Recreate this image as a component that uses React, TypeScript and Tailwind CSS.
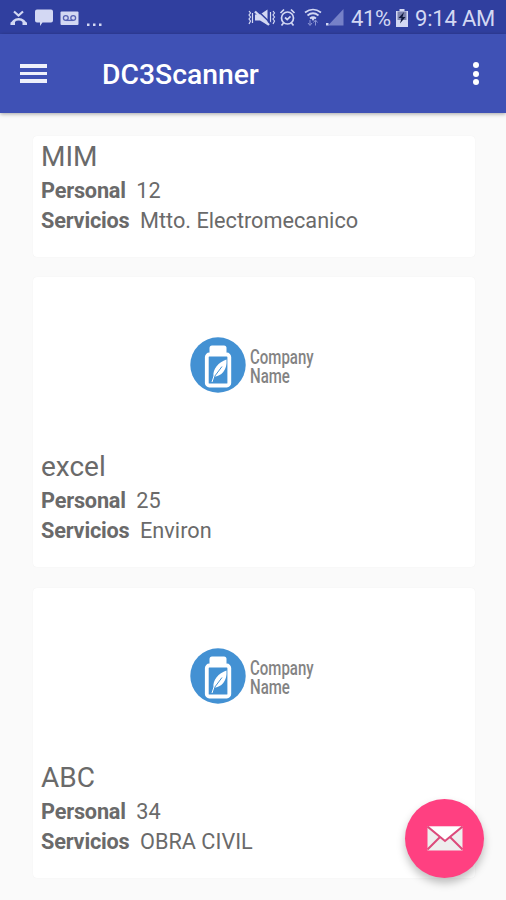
import React from "react";

type Company = { name: string; staff: string; service: string; logo: boolean };

const companies: Company[] = [
  { name: "MIM", staff: "12", service: "Mtto. Electromecanico", logo: false },
  { name: "excel", staff: "25", service: "Environ", logo: true },
  { name: "ABC", staff: "34", service: "OBRA CIVIL", logo: true },
];

function StatusBar() {
  return (
    <div className="flex h-[34px] shrink-0 items-center bg-[#303f9f] pt-[2px] text-[#d3d8f3]">
      <svg className="ml-[10px] h-[18px] w-[92px]" viewBox="10 9 92 18" fill="currentColor">
        <path d="M14 11.500 18.500 15.500 23 11.500" fill="none" stroke="currentColor" strokeWidth="2.200" />
        <path d="M12 24.500c0-2.500 3-5.200 6.700-5.200s6.700 2.700 6.700 5.200" fill="none" stroke="currentColor" strokeWidth="2.600" />
        <path d="M10.500 22.500l4.500-1.500v4h-4.500zM27 22.500 22.500 21v4H27z" />
        <path d="M37 9.500h14q2 0 2 2v9q0 2-2 2h-8.500L40 26v-3.500h-3q-2 0-2-2v-9q0-2 2-2z" />
        <rect x="60.500" y="11.500" width="18" height="13.500" rx="1" />
        <g fill="none" stroke="#5561b3" strokeWidth="1.300">
          <circle cx="65.800" cy="18" r="2.400" />
          <circle cx="73.200" cy="18" r="2.400" />
          <path d="M65.800 20.400h7.400" />
        </g>
        <path d="M87 23.500h2.500v2.500H87zM93 23.500h2.500v2.500H93zM99 23.500h2.500v2.500H99z" />
      </svg>
      <svg className="ml-[146px] h-[20px] w-[98px]" viewBox="248 8 98 20" fill="currentColor">
        <path d="M249 11l1.500 2-1.500 2 1.500 2-1.500 2 1.500 2-1.500 3M252.500 13v10M270.500 12v11M273 11l1.500 2-1.500 2 1.500 2-1.500 2 1.500 2-1.500 3" fill="none" stroke="currentColor" strokeWidth="1.200" />
        <path d="M255 14.500h5l7.500-5v15.500l-7.500-4.500h-5z" />
        <path d="M257.500 10.500 271 23.500" stroke="#303f9f" strokeWidth="1.500" />
        <path d="M255 11.500 269 25" stroke="currentColor" strokeWidth="2.400" />
        <g fill="none" stroke="currentColor" strokeWidth="1.700">
          <circle cx="287.500" cy="18" r="6" />
          <path d="M280.500 13l3.500-3.500M294.500 13 291 9.500M283.500 23l-2 2.500M291.500 23l2 2.500M285 17.500l2.200 2 3.300-3.200" />
        </g>
        <g fill="none" stroke="currentColor" strokeWidth="1.700">
          <path d="M305 12.500q8-6 16 0M307.500 15.500q5.500-4.500 11 0M310 18.500q3-2.500 6 0" />
        </g>
        <path d="M311 18h4l-2 3z" />
        <path d="M310 20v5M308 23l2 2.500 2-2.500M315.500 25.500v-5M313.500 22.500l2-2.500 2 2.500" stroke="#8c96d5" strokeWidth="1" fill="none" />
        <path d="M343.500 9v16.500H328z" fill="#7681c8" />
        <path d="M326 23h2.500v2.500H326z" />
      </svg>
      <span className="ml-[5px] mt-[1px] w-[40px] whitespace-nowrap text-[22px] leading-[24px] tracking-[-0.4px]">41%</span>
      <svg className="ml-[5px] h-[18px] w-[12px]" viewBox="0 0 12 18">
        <path d="M3.500 0h5v2H12v16H0V2h3.500z" fill="#d3d8f3" />
        <path d="M1.500 2.500h9V11h-9z" fill="#7d83ae" />
        <path d="M8 3 2.500 9h3L4 14.500 9.500 8h-3z" fill="#111a3f" />
      </svg>
      <span className="ml-[7px] mt-[1px] whitespace-nowrap text-[22px] leading-[24px] tracking-[-0.2px]">9:14 AM</span>
    </div>
  );
}

function AppBar() {
  return (
    <header className="z-10 flex h-[79px] shrink-0 items-center bg-[#3f51b5] text-white shadow-[0_1px_4px_rgba(0,0,0,0.35)]">
      <div className="ml-5 flex w-[27px] flex-col gap-1">
        <span className="h-[3.500px] bg-[#eef0fb]" />
        <span className="h-[3.500px] bg-[#eef0fb]" />
        <span className="h-[3.500px] bg-[#eef0fb]" />
      </div>
      <h1 className="ml-[55px] flex-1 pt-[2px] text-[28.300px] font-medium leading-[34px]">DC3Scanner</h1>
      <div className="mr-[27px] flex flex-col gap-[2.500px]">
        <span className="size-[6px] rounded-full bg-white" />
        <span className="size-[6px] rounded-full bg-white" />
        <span className="size-[6px] rounded-full bg-white" />
      </div>
    </header>
  );
}

function Logo() {
  return (
    <div className="flex h-[164px] pl-[149px] pt-[52px]">
      <svg className="size-[56px] shrink-0" viewBox="0 0 56 56">
        <circle cx="28" cy="28" r="27.700" fill="#4391d3" />
        <rect x="19.500" y="8.500" width="17" height="9" rx="2.500" fill="#fff" />
        <rect x="16.800" y="17.500" width="22.500" height="31" rx="2.500" fill="none" stroke="#fff" strokeWidth="3.800" />
        <path d="M36.500 22.500c-8 3-14 9-13 17 7 .5 14-6 13-17z" fill="#fff" />
        <path d="M35 25 24 39l-2 6" fill="none" stroke="#fff" strokeWidth="1" />
        <path d="M32 29.500 24.500 39.500" stroke="#4391d3" strokeWidth="1" />
      </svg>
      <div className="ml-[4px] mt-[11px] h-[38px] w-[100px] origin-left scale-x-[0.77] text-[19.500px] font-medium leading-[19px] text-[#838383]">
        Company Name
      </div>
    </div>
  );
}

function CompanyCard({ company }: { company: Company }) {
  return (
    <section className={`shrink-0 rounded-[4px] bg-white px-2 text-[#6a6a6a] shadow-[0_0_1px_rgba(0,0,0,0.08)] ${company.logo ? "h-[290px] pt-[8px]" : "h-[121px] pt-[3px]"}`}>
      {company.logo && <Logo />}
      <h2 className="mb-[1px] text-[28px] leading-[36px]">{company.name}</h2>
      <p className="flex gap-[10.500px] text-[21.700px] leading-[30px]">
        <b className="tracking-[-0.2px]">Personal</b>
        <span>{company.staff}</span>
      </p>
      <p className="flex gap-[10.500px] text-[21.700px] leading-[30px]">
        <b className="tracking-[-0.2px]">Servicios</b>
        <span>{company.service}</span>
      </p>
    </section>
  );
}

export default function App() {
  return (
    <div className="relative flex h-[900px] w-[506px] flex-col overflow-hidden bg-[#fafafa] font-['Roboto',sans-serif]">
      <StatusBar />
      <AppBar />
      <main className="flex flex-col gap-[20.400px] pl-[33px] pr-[31px] pt-[23px]">
        {companies.map((company) => (
          <CompanyCard key={company.name} company={company} />
        ))}
      </main>
      <button className="absolute bottom-[22px] right-[22px] flex size-[79px] items-center justify-center rounded-full bg-[#ff4081] shadow-[0_5px_9px_rgba(0,0,0,0.25)]">
        <svg className="h-[25px] w-[36px]" viewBox="0 0 36 25">
          <rect x=".5" y=".5" width="35" height="24" fill="#eee" />
          <path d="M.5.5h35L18 15z" fill="#fff" />
          <path d="M.5.5 18 15 35.500.5M.5 23.500 13 11M35.500 23.500 23 11" fill="none" stroke="#dc4a7b" strokeWidth="2" />
        </svg>
      </button>
    </div>
  );
}
